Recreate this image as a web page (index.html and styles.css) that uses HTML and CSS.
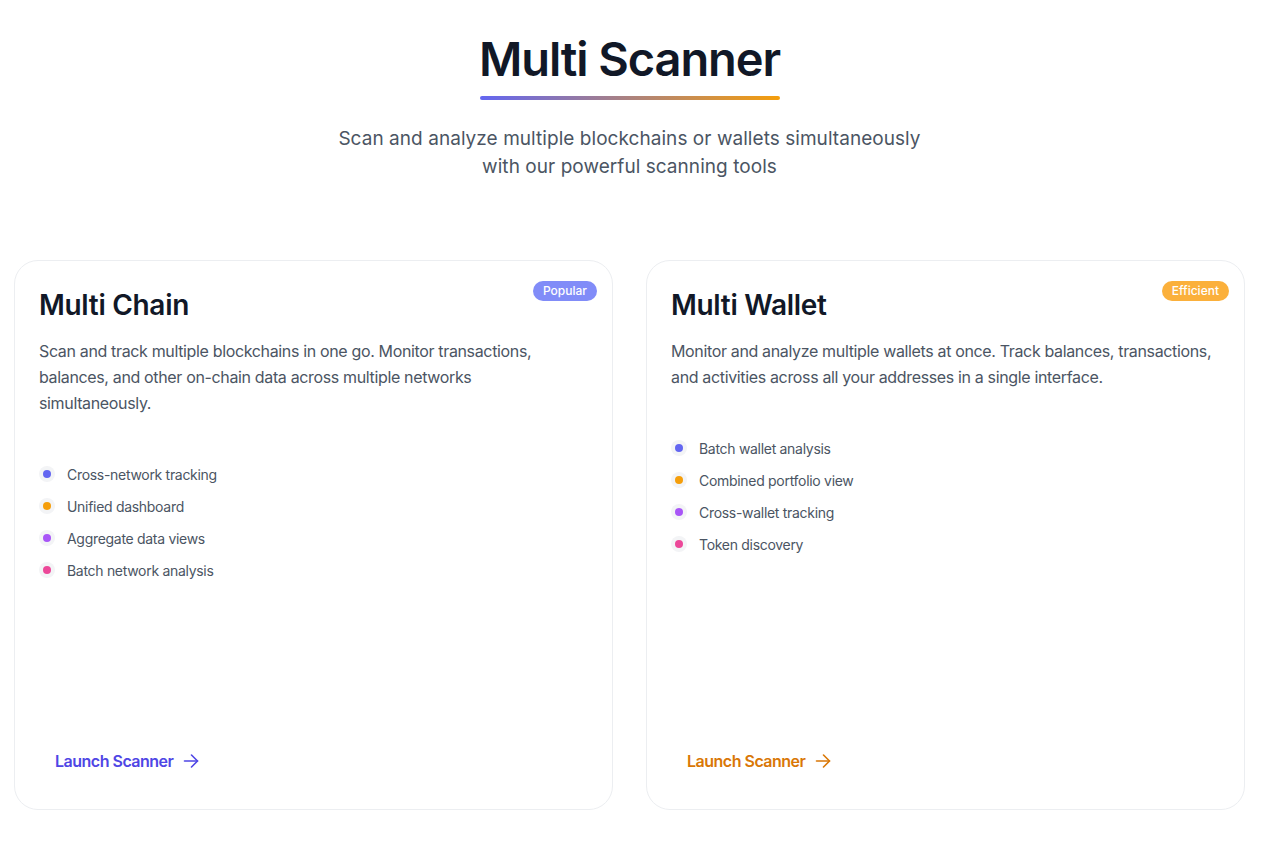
FILE: index.html
```html
<!DOCTYPE html>
<html lang="en">
<head>
<meta charset="utf-8">
<title>Multi Scanner</title>
<link rel="stylesheet" href="styles.css">
</head>
<body>
<main class="page">
  <header class="hero">
    <h1 class="hero-title">Multi Scanner</h1>
    <div class="hero-bar"></div>
    <p class="hero-sub">Scan and analyze multiple blockchains or wallets simultaneously<br>with our powerful scanning tools</p>
  </header>
  <section class="cards">
    <article class="card">
      <span class="badge badge-indigo">Popular</span>
      <h2 class="card-title">Multi Chain</h2>
      <p class="card-desc">Scan and track multiple blockchains in one go. Monitor transactions, balances, and other on-chain data across multiple networks simultaneously.</p>
      <ul class="features">
        <li class="feature"><span class="dot"><span class="dot-in c-indigo"></span></span>Cross-network tracking</li>
        <li class="feature"><span class="dot"><span class="dot-in c-amber"></span></span>Unified dashboard</li>
        <li class="feature"><span class="dot"><span class="dot-in c-purple"></span></span>Aggregate data views</li>
        <li class="feature"><span class="dot"><span class="dot-in c-pink"></span></span>Batch network analysis</li>
      </ul>
      <a class="launch launch-indigo" href="#">Launch Scanner
        <svg class="arrow" viewBox="0 0 16 16" width="16" height="16" fill="none" stroke="currentColor" stroke-width="1.6" stroke-linecap="round" stroke-linejoin="round"><path d="M1.5 8h13"/><path d="M8.5 2l6 6-6 6"/></svg>
      </a>
    </article>
    <article class="card">
      <span class="badge badge-amber">Efficient</span>
      <h2 class="card-title">Multi Wallet</h2>
      <p class="card-desc">Monitor and analyze multiple wallets at once. Track balances, transactions, and activities across all your addresses in a single interface.</p>
      <ul class="features">
        <li class="feature"><span class="dot"><span class="dot-in c-indigo"></span></span>Batch wallet analysis</li>
        <li class="feature"><span class="dot"><span class="dot-in c-amber"></span></span>Combined portfolio view</li>
        <li class="feature"><span class="dot"><span class="dot-in c-purple"></span></span>Cross-wallet tracking</li>
        <li class="feature"><span class="dot"><span class="dot-in c-pink"></span></span>Token discovery</li>
      </ul>
      <a class="launch launch-amber" href="#">Launch Scanner
        <svg class="arrow" viewBox="0 0 16 16" width="16" height="16" fill="none" stroke="currentColor" stroke-width="1.6" stroke-linecap="round" stroke-linejoin="round"><path d="M1.5 8h13"/><path d="M8.5 2l6 6-6 6"/></svg>
      </a>
    </article>
  </section>
</main>
</body>
</html>
```

FILE: styles.css
```css
* { box-sizing: border-box; }
html, body { margin: 0; padding: 0; background: #ffffff; }
body {
  font-family: Inter, "Noto Sans", sans-serif;
  color: #111827;
}
.page {
  width: 1231px;
  margin-left: 14px;
  padding-top: 31px;
}
.hero {
  display: flex;
  flex-direction: column;
  align-items: center;
}
.hero-title {
  margin: 0;
  font-size: 47px;
  line-height: 56px;
  font-weight: 600;
  color: #111827;
  letter-spacing: -1.1px;
}
.hero-bar {
  width: 300px;
  height: 4px;
  border-radius: 2px;
  margin-top: 9px;
  background: linear-gradient(90deg, #6366f1, #f59e0b);
}
.hero-sub {
  margin: 25px 0 0;
  text-align: center;
  font-size: 19px;
  line-height: 28px;
  color: #4b5563;
  letter-spacing: 0.05px;
}
.cards {
  display: grid;
  grid-template-columns: 1fr 1fr;
  gap: 33px;
  margin-top: 79px;
}
.card {
  position: relative;
  height: 550px;
  border: 1px solid #eceef1;
  border-radius: 24px;
  padding: 26px 24px 26px;
  display: flex;
  flex-direction: column;
  background: #fff;
}
.badge {
  position: absolute;
  top: 20px;
  right: 15px;
  height: 20px;
  padding: 0 10px;
  border-radius: 10px;
  font-size: 12px;
  line-height: 20px;
  font-weight: 500;
  color: #fff;
}
.badge-indigo { background: #818cf8; }
.badge-amber { background: #fbb03b; }
.card-title {
  margin: 0;
  font-size: 28px;
  line-height: 36px;
  font-weight: 600;
  color: #111827;
  letter-spacing: -0.3px;
}
.card-desc {
  margin: 15px 0 0;
  padding-right: 4px;
  font-size: 16px;
  line-height: 26px;
  color: #4b5563;
  letter-spacing: -0.35px;
}
.features {
  list-style: none;
  margin: 48px 0 0;
  padding: 0;
  display: flex;
  flex-direction: column;
  gap: 12px;
}
.feature {
  display: flex;
  align-items: center;
  height: 20px;
  font-size: 14px;
  color: #4b5563;
  letter-spacing: -0.3px;
}
.dot {
  width: 16px;
  height: 16px;
  border-radius: 50%;
  background: #f3f4f6;
  display: flex;
  align-items: center;
  justify-content: center;
  margin-right: 12px;
}
.dot-in { width: 8px; height: 8px; border-radius: 50%; }
.c-indigo { background: #6366f1; }
.c-amber { background: #f59e0b; }
.c-purple { background: #a855f7; }
.c-pink { background: #ec4899; }
.launch {
  margin-top: auto;
  align-self: flex-start;
  display: flex;
  align-items: center;
  gap: 10px;
  padding: 12px 16px;
  font-size: 16px;
  font-weight: 600;
  letter-spacing: -0.5px;
  text-decoration: none;
}
.launch-indigo { color: #4f46e5; }
.launch-amber { color: #d97706; }
```
